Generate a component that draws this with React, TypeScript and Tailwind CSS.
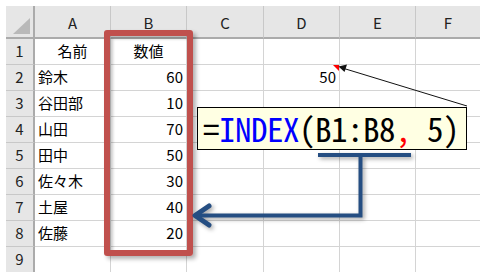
import React from 'react';

const cols = ['A', 'B', 'C', 'D', 'E', 'F'];

const rows: { name: string; value: string; center?: boolean }[] = [
  { name: '名前', value: '数値', center: true },
  { name: '鈴木', value: '60' },
  { name: '谷田部', value: '10' },
  { name: '山田', value: '70' },
  { name: '田中', value: '50' },
  { name: '佐々木', value: '30' },
  { name: '土屋', value: '40' },
  { name: '佐藤', value: '20' },
  { name: '', value: '' },
];

const cell = 'h-[26px] border-r border-b border-[#d4d4d4] flex items-center text-[15px] text-black';

export default function App() {
  return (
    <div className="relative w-[480px] h-[272px] overflow-hidden bg-white pl-[6px] pt-[6px] font-['Noto_Sans_CJK_JP',sans-serif]">
      {/* Sheet grid */}
      <div className="grid grid-cols-[29px_76px_76px_77px_76px_76px_1fr]">
        {/* corner */}
        <div className="h-[33px] bg-[#e6e6e6] border-r-2 border-b-2 border-[#ababab] flex items-end justify-end pr-[3px] pb-[3px]">
          <svg width="17" height="16" viewBox="0 0 17 16">
            <polygon points="17,0 17,16 0,16" fill="#b9b9b9" />
          </svg>
        </div>
        {cols.map((c, i) => (
          <div
            key={c}
            className={`h-[33px] bg-[#e6e6e6] border-b-2 border-[#ababab] flex items-center justify-center pt-[3px] text-[15px] text-[#222] ${i < 5 ? 'border-r border-r-[#c8c8c8]' : ''}`}
          >
            {c}
          </div>
        ))}

        {rows.map((r, i) => (
          <React.Fragment key={i}>
            <div className="h-[26px] bg-[#e6e6e6] border-r-2 border-r-[#ababab] border-b border-b-[#c8c8c8] flex items-center justify-center text-[15px] text-[#222]">
              {i + 1}
            </div>
            <div className={`${cell} px-[3px] ${r.center ? 'justify-center' : ''}`}>{r.name}</div>
            <div className={`${cell} px-[3px] ${r.center ? 'justify-center' : 'justify-end'}`}>{r.value}</div>
            <div className={cell}></div>
            <div className={`${cell} relative justify-end pr-[3px]`}>
              {i === 1 && (
                <>
                  <span>50</span>
                  <svg className="absolute top-0 right-0" width="6" height="6" viewBox="0 0 6 6">
                    <polygon points="0,0 6,0 6,6" fill="#ff0000" />
                  </svg>
                </>
              )}
            </div>
            <div className={cell}></div>
            <div className="h-[26px] border-b border-[#d4d4d4]"></div>
          </React.Fragment>
        ))}
      </div>

      {/* Red highlight around column B */}
      <div className="absolute left-[104px] top-[30px] w-[89px] h-[226px] border-[6px] border-[#c0504d] rounded-[3px] shadow-[3px_3px_4px_rgba(0,0,0,0.3),inset_3px_3px_3px_rgba(0,0,0,0.2)]"></div>

      {/* Comment callout line */}
      <svg className="absolute left-0 top-0 pointer-events-none" width="480" height="272" viewBox="0 0 480 272">
        <line x1="467" y1="106" x2="344" y2="68.5" stroke="#111" strokeWidth="1" />
        <polygon points="338.5,66.5 347,64.5 344.5,72" fill="#111" />
      </svg>

      {/* Blue connector arrow */}
      <svg
        className="absolute left-0 top-0 pointer-events-none drop-shadow-[2px_2px_2px_rgba(0,0,0,0.35)]"
        width="480"
        height="272"
        viewBox="0 0 480 272"
      >
        <line x1="318" y1="155" x2="411" y2="155" stroke="#254e82" strokeWidth="4" />
        <polyline points="360.5,155 360.5,215.5 197,215.5" fill="none" stroke="#254e82" strokeWidth="4" />
        <polyline
          points="209,206 195,215.5 209,225"
          fill="none"
          stroke="#254e82"
          strokeWidth="5"
          strokeLinecap="round"
          strokeLinejoin="round"
        />
      </svg>

      {/* Formula box */}
      <div className="absolute left-[197px] top-[107px] w-[270px] h-[43px] bg-[#ffffe3] border border-black flex items-center pl-[5px] text-[33px] tracking-[-0.5px] leading-none font-['Noto_Sans_Mono_CJK_JP','Noto_Sans_CJK_JP',monospace] [font-feature-settings:'hwid'] text-black whitespace-pre">
        <span>=</span>
        <span className="text-[#0000ff]">INDEX</span>
        <span>(B1:B8</span>
        <span className="text-[#ff0000]">,</span>
        <span> 5)</span>
      </div>
    </div>
  );
}
